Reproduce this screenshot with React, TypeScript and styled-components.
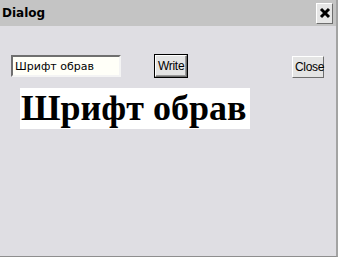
import React from 'react';
import styled, { createGlobalStyle } from 'styled-components';

const GlobalStyle = createGlobalStyle`
    html, body {
        margin: 0;
        padding: 0;
        background: #ffffff;
        overflow: hidden;
    }
`;

const Window = styled.div`
    width: 336px;
    height: 256px;
    background: #dfdee3;
    border-right: 2px solid #a3a3a3;
    border-bottom: 1px solid #8e8e8e;
    display: flex;
    flex-direction: column;
`;

const TitleBar = styled.div`
    height: 26px;
    background: #c4c4c4;
    display: flex;
    align-items: center;
    justify-content: space-between;
    padding: 0 2px 0 2px;
    box-sizing: border-box;
`;

const Title = styled.div`
    font-family: "DejaVu Sans", sans-serif;
    font-weight: bold;
    font-size: 12px;
    color: #000;
`;

const CloseX = styled.button`
    width: 17px;
    height: 21px;
    margin-right: 1px;
    padding: 0;
    background: #e6e6e6;
    border: 1px solid;
    border-color: #ffffff #6e6e6e #6e6e6e #ffffff;
    display: flex;
    align-items: center;
    justify-content: center;
`;

const Body = styled.div`
    flex: 1;
    padding: 29px 0 0 11px;
    display: flex;
    flex-direction: column;
`;

const Row = styled.div`
    display: flex;
    align-items: flex-start;
`;

const TextField = styled.input`
    width: 110px;
    height: 22px;
    box-sizing: border-box;
    border: 2px solid;
    border-color: #6f6f6f #f4f4f4 #f4f4f4 #6f6f6f;
    background: #fffff8;
    font-family: "DejaVu Sans", sans-serif;
    font-size: 11px;
    padding: 0 2px;
    outline: none;
    color: #000;
`;

const Button = styled.button<{ $focused?: boolean }>`
    height: 22px;
    box-sizing: border-box;
    padding: 0 2px;
    font-family: "Liberation Sans", sans-serif;
    font-size: 12px;
    letter-spacing: -0.3px;
    color: #000;
    background: #e4e4e4;
    border: 1px solid;
    border-color: #ffffff #6e6e6e #6e6e6e #ffffff;
    outline: ${(p) => (p.$focused ? '1px solid #000' : 'none')};
    outline-offset: 0;
    box-shadow: ${(p) => (p.$focused ? 'inset -1px -1px 0 #9a9a9a' : 'none')};
`;

const WriteButton = styled(Button)`
    margin-left: 34px;
    width: 32px;
`;

const CloseButton = styled(Button)`
    margin-left: auto;
    margin-right: 12px;
    margin-top: 1px;
    width: 32px;
`;

const Sample = styled.div`
    align-self: flex-start;
    margin: 10px 0 0 9px;
    width: 230px;
    height: 41px;
    background: #ffffff;
    font-family: "Liberation Serif", serif;
    font-weight: bold;
    font-size: 36px;
    line-height: 41px;
    color: #000;
    padding-left: 1px;
    box-sizing: border-box;
    white-space: nowrap;
`;

const App: React.FC = () => {
    return (
        <>
            <GlobalStyle />
            <Window>
                <TitleBar>
                    <Title>Dialog</Title>
                    <CloseX>
                        <svg width="12" height="12" viewBox="0 0 12 12">
                            <path d="M2 2 L10 10 M10 2 L2 10" stroke="#000" strokeWidth="3" />
                        </svg>
                    </CloseX>
                </TitleBar>
                <Body>
                    <Row>
                        <TextField defaultValue="Шрифт обрав" />
                        <WriteButton $focused>Write</WriteButton>
                        <CloseButton>Close</CloseButton>
                    </Row>
                    <Sample>Шрифт обрав</Sample>
                </Body>
            </Window>
        </>
    );
};

export default App;
